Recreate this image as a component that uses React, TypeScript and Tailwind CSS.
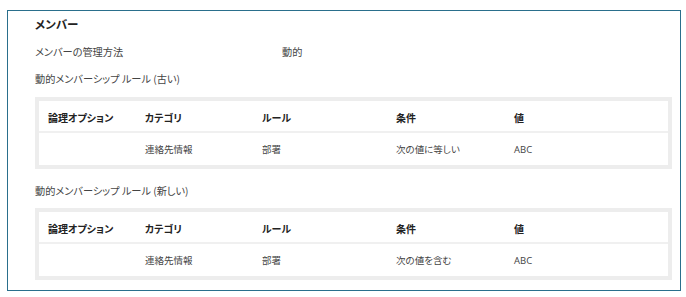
import React from 'react';

const columns = ['論理オプション', 'カテゴリ', 'ルール', '条件', '値'];

type Rule = {option: string; category: string; rule: string; condition: string; value: string};

function RuleTable({row}: {row: Rule}) {
  const cells = [row.option, row.category, row.rule, row.condition, row.value];
  return (
    <div className="mr-[8px] border-4 border-[#ededed] bg-white">
      <div className="grid h-[32px] grid-cols-[97px_117px_134px_118px_1fr] items-center border-b-2 border-[#f0f0f0] pl-[9px] pt-[2px] text-[10px] font-bold text-[#222]">
        {columns.map((c) => (
          <div key={c}>{c}</div>
        ))}
      </div>
      <div className="grid h-[32px] grid-cols-[97px_117px_134px_118px_1fr] items-center pl-[9px] text-[9.5px] text-[#444]">
        {cells.map((c, i) => (
          <div key={i} className={i === 4 ? 'pt-[2px] font-["Open_Sans",sans-serif]' : ''}>
            {c}
          </div>
        ))}
      </div>
    </div>
  );
}

export default function App() {
  return (
    <div className="h-[297px] w-[686px] bg-white pl-[7px] pt-[10px] font-['Noto_Sans_CJK_JP','Noto_Sans',sans-serif] [font-feature-settings:'palt']">
      <div className="h-[281px] w-[674px] border border-[#2a6f8c] pl-[27px]">
        <div className="h-[26px] text-[11.5px] font-bold leading-[26px] text-[#222]">メンバー</div>
        <div className="flex h-[30px] items-center text-[10.2px] text-[#444]">
          <span className="w-[247px]">メンバーの管理方法</span>
          <span>動的</span>
        </div>
        <div className="h-[24px] text-[10.2px] leading-[24px] text-[#444]">動的メンバーシップ ルール (古い)</div>
        <div className="mt-[6px]">
          <RuleTable row={{option: '', category: '連絡先情報', rule: '部署', condition: '次の値に等しい', value: 'ABC'}} />
        </div>
        <div className="h-[39px] pt-[12px] text-[10.2px] leading-[20px] text-[#444]">動的メンバーシップ ルール (新しい)</div>
        <RuleTable row={{option: '', category: '連絡先情報', rule: '部署', condition: '次の値を含む', value: 'ABC'}} />
      </div>
    </div>
  );
}
